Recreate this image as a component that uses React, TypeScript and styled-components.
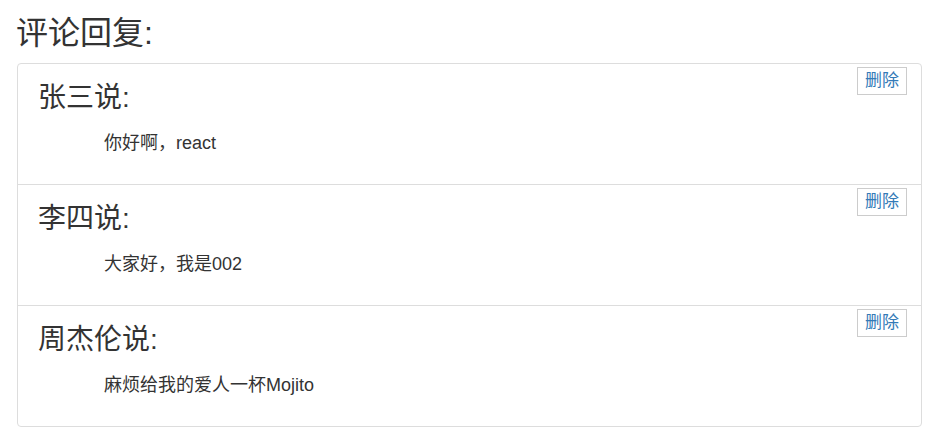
import React from "react";
import styled, { createGlobalStyle } from "styled-components";

const Global = createGlobalStyle`
  html, body { margin: 0; padding: 0; background: #fff; }
  body {
    font-family: "Liberation Sans", Arial, "Noto Sans CJK SC", sans-serif;
    color: #333;
  }
`;

const Page = styled.div`
  padding: 0 18px 0 17px;
`;

const Title = styled.h2`
  margin: 0 0 0 -1px;
  padding-top: 16px;
  height: 63px;
  box-sizing: border-box;
  font-size: 32px;
  font-weight: 400;
  line-height: 1.1;
  color: #333;
`;

const List = styled.ul`
  list-style: none;
  margin: 0;
  padding: 0;
  border: 1px solid #ddd;
  border-radius: 4px;
`;

const Item = styled.li<{ $last?: boolean }>`
  position: relative;
  height: 101px;
  padding: 19px 20px 0 21px;
  border-bottom: ${(p) => (p.$last ? "none" : "1px solid #ddd")};
`;

const Name = styled.h3`
  margin: 0 0 0 -1px;
  font-size: 28px;
  font-weight: 400;
  line-height: 1.1;
  color: #333;
`;

const Content = styled.p`
  margin: 17px 0 0 65px;
  font-size: 18px;
  line-height: 1.4;
  color: #333;
`;

const DeleteButton = styled.button`
  position: absolute;
  top: 3px;
  right: 14px;
  height: 28px;
  padding: 0 7px;
  border: 1px solid #ccc;
  border-radius: 0;
  background: #fff;
  color: #337ab7;
  font-family: "Liberation Sans", Arial, "Noto Sans CJK SC", sans-serif;
  font-size: 17px;
  line-height: 26px;
  cursor: pointer;
`;

const comments = [
  { name: "张三", text: "你好啊，react" },
  { name: "李四", text: "大家好，我是002" },
  { name: "周杰伦", text: "麻烦给我的爱人一杯Mojito" },
];

export default function App() {
  return (
    <Page>
      <Global />
      <Title>评论回复:</Title>
      <List>
        {comments.map((c, i) => (
          <Item key={i} $last={i === comments.length - 1}>
            <Name>{c.name}说:</Name>
            <Content>{c.text}</Content>
            <DeleteButton>删除</DeleteButton>
          </Item>
        ))}
      </List>
    </Page>
  );
}
